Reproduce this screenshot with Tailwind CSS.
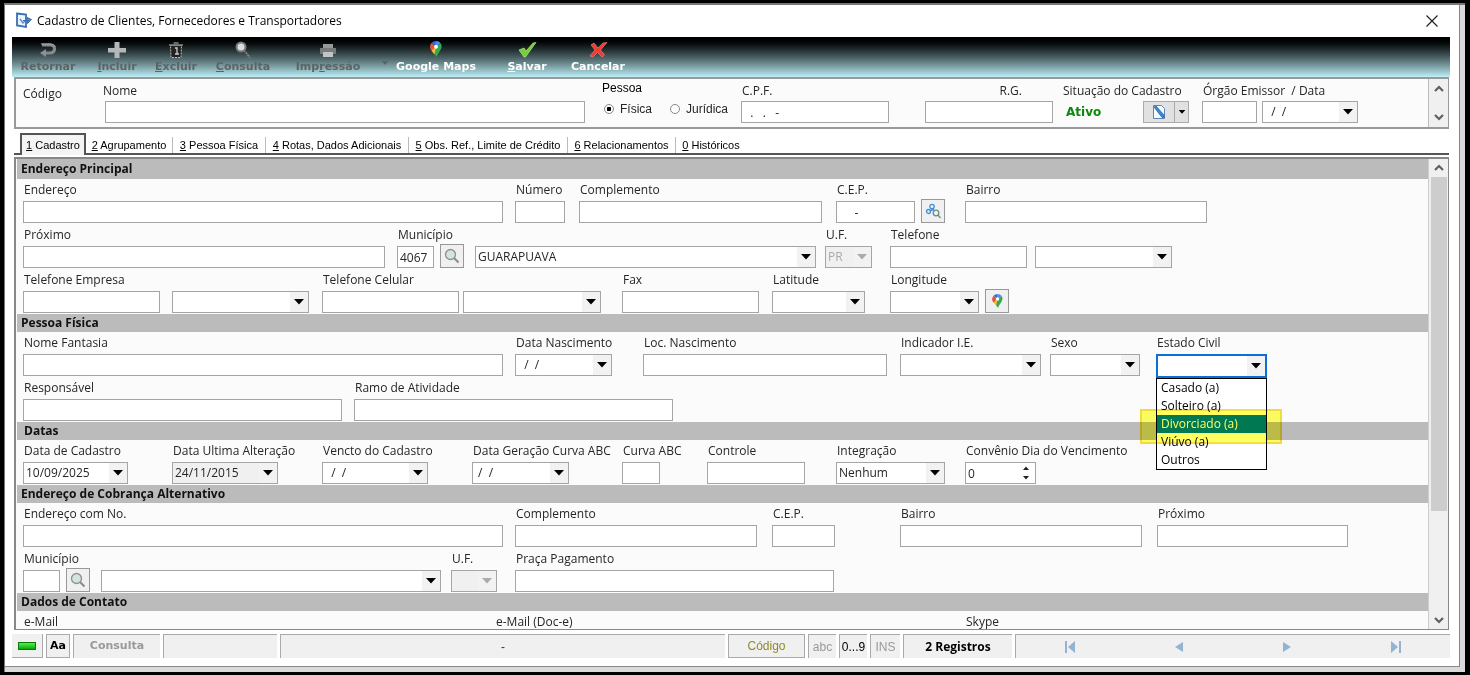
<!DOCTYPE html>
<html lang="pt-BR">
  <head>
    <meta charset="utf-8" />
    <meta name="viewport" content="width=device-width, initial-scale=1" />
    <title>Cadastro de Clientes, Fornecedores e Transportadores</title>
    <script src="https://cdn.jsdelivr.net/npm/@tailwindcss/browser@4"></script>
  </head>
  <body class="bg-black font-['Open_Sans','Noto_Sans',sans-serif] text-xs text-[#262626]">
    <!-- shared icons -->
    <svg class="hidden">
      <symbol id="arrow" viewBox="0 0 10 6"><path d="M0 0h10L5 5.500z" fill="currentColor" /></symbol>
      <symbol id="up" viewBox="0 0 10 8"><path d="M1 6l4-4 4 4" fill="none" stroke="#606060" stroke-width="2.200" /></symbol>
      <symbol id="down" viewBox="0 0 10 8"><path d="M1 2l4 4 4-4" fill="none" stroke="#606060" stroke-width="2.200" /></symbol>
      <symbol id="lens" viewBox="0 0 16 16">
        <path d="M10 10l4.500 4.500" stroke="#8a8a8a" stroke-width="2" />
        <circle cx="6.500" cy="6.500" r="5" fill="#d3e3e0" stroke="#8b9290" stroke-width="1.300" />
      </symbol>
      <symbol id="pin" viewBox="0 0 12 16">
        <path d="M6 0a6 6 0 0 1 4.800 2.400L6 6z" fill="#4a8df0" />
        <path d="M1.500 2A6 6 0 0 1 6 0v6z" fill="#2f6fd8" />
        <path d="M1.500 2L6 6 1.700 10A6 6 0 0 1 1.500 2z" fill="#e8503a" />
        <path d="M1.500 9.500L6 6l1 5-2.500 2.500C3.500 12 2.200 11 1.500 9.500z" fill="#f6bd2b" />
        <path d="M10.800 2.400C13.500 7 9 10 6.600 16 6 15 5.500 14 4.500 13L6 6z" fill="#37a852" />
        <circle cx="6" cy="5.800" r="2" fill="#fff" />
      </symbol>
    </svg>

    <div class="h-screen pt-[3px] pb-[3px] pl-1 pr-[5px]">
      <div class="flex h-full flex-col border-t-2 border-l border-[#777] bg-[#dadada] pr-[5px] pb-[5px]">
        <div class="flex min-h-0 flex-1 flex-col border-r border-b border-[#888] bg-white pr-[9px] pb-2 pl-[7px]">
          <!-- title bar -->
          <header class="flex h-8 shrink-0 items-center pr-3 pl-[3px]">
            <svg class="h-[18px] w-[18px]" viewBox="0 0 18 18">
              <path d="M2 1.500l9 1v12.500l-9-1.500z" fill="#eaf4ff" stroke="#3c6db5" stroke-width="1.800" />
              <path d="M5 7l3 4 2-2" fill="none" stroke="#5b8acb" stroke-width="1.400" />
              <path d="M8 8.500h6M12 5.500l4.500 2-4 4z" stroke="#3a69a8" fill="#5b8acb" />
            </svg>
            <h1 class="ml-1 text-black">Cadastro de Clientes, Fornecedores e Transportadores</h1>
            <button aria-label="Fechar" class="ml-auto">
              <svg class="h-3 w-3" viewBox="0 0 12 12"><path d="M.5.5l11 11M11.500.5l-11 11" stroke="#222" stroke-width="1.200" /></svg>
            </button>
          </header>

          <!-- toolbar -->
          <nav class="flex h-10 shrink-0 items-start bg-linear-to-b from-black to-[#bdf0f8] pt-1 font-['DejaVu_Sans',sans-serif] text-[11px] leading-3 font-bold whitespace-nowrap text-[#5c6466] [&_button]:flex [&_button]:flex-col [&_button]:items-center [&_button]:gap-0.5 [&_svg]:h-[18px] [&_svg]:w-5">
            <button class="ml-2 w-14">
              <svg viewBox="0 0 20 18"><path d="M4 4h8c6 0 6 8 0 8H7" fill="none" stroke="#868a8a" stroke-width="3.200" /><path d="M8 8l-6 4 6 4z" fill="#8c9090" /><path d="M3 3h9c3 0 5 1 5 3" fill="none" stroke="#a8acac" /></svg>
              Retornar
            </button>
            <button class="ml-5 w-[42px]">
              <svg viewBox="0 0 20 18"><path d="M7.500 1h5v6H19v4.500h-6.500V17h-5v-5.500H1V7h6.500z" fill="#b4b7b7" /></svg>
              <span><u>I</u>ncluir</span>
            </button>
            <button class="ml-[17px] w-[42px]">
              <svg viewBox="0 0 20 18"><path d="M4.500 4.500h11L15 16.500H5z" fill="#222" stroke="#bbb" stroke-dasharray="2 1" /><path d="M3 4h14M7.500 2h5" stroke="#888" stroke-width="1.500" /><path d="M9 7h2v6m-2 0h4" stroke="#ccc" fill="none" stroke-width="1.300" /></svg>
              <span><u>E</u>xcluir</span>
            </button>
            <button class="ml-5 w-[52px]">
              <svg viewBox="0 0 20 18"><path d="M11 9l6 8" stroke="#888" stroke-width="1.800" stroke-dasharray="2 1" /><circle cx="8" cy="6" r="4.500" fill="#d9dddd" stroke="#777" stroke-width="2" /></svg>
              <span><u>C</u>onsulta</span>
            </button>
            <button class="ml-[26px] w-[66px]">
              <svg viewBox="0 0 20 18"><path d="M5 3h10v5H5z" fill="#999" /><path d="M2 7h16v6H2z" fill="#777b7b" /><path d="M5 11h10v5H5z" fill="#c2c5c5" /></svg>
              <span>Imp<u>r</u>essão</span>
            </button>
            <button aria-label="Opções de impressão" class="ml-5 w-2 pt-5"><svg class="!h-1 !w-2" viewBox="0 0 10 6"><use href="#arrow" /></svg></button>
            <button class="ml-2 w-[78px] text-white"><svg class="mb-0.5 !h-4 !w-3" viewBox="0 0 12 16"><use href="#pin" /></svg>Google Maps</button>
            <button class="ml-8 w-10 text-white">
              <svg viewBox="0 0 20 18"><path d="M2 9l5-2 2 3 7-8 3-.5L8.500 16H7z" fill="#74cf35" stroke="#c6f0a0" stroke-width=".6" /></svg>
              <span><u>S</u>alvar</span>
            </button>
            <button class="ml-6 w-[54px] text-white">
              <svg viewBox="0 0 20 18"><path d="M3 4l3-2 4 5 5-5 4-.5L12.500 9l4 5-2.500 2-4.500-4.500L5 16l-3-1 5-6z" fill="#ea3d35" stroke="#f58d87" stroke-width=".6" /></svg>
              Cancelar
            </button>
          </nav>

          <main class="flex min-h-0 flex-1 flex-col pl-0.5 pr-px [&_.combo]:relative [&_.combo]:block [&_.combo>svg]:pointer-events-none [&_.combo>svg]:absolute [&_.combo>svg]:top-px [&_.combo>svg]:right-px [&_.combo>svg]:h-5 [&_.combo>svg]:w-[18px] [&_.combo>svg]:bg-[#f2f2f2] [&_.combo>svg]:px-1 [&_.combo>svg]:text-black [&_.row]:flex [&_.row]:h-[45px] [&_.row]:items-end [&_.row]:pb-px [&_.row]:pl-1.5 [&_h2]:h-[18px] [&_h2]:bg-[#bbb] [&_h2]:pl-1 [&_h2]:leading-[18px] [&_h2]:font-bold [&_h2]:text-[#111] [&_input[type=text]]:block [&_input[type=text]]:h-[22px] [&_input[type=text]]:w-full [&_input[type=text]]:border [&_input[type=text]]:border-[#a5a5a5] [&_input[type=text]]:bg-white [&_input[type=text]]:px-0.5 [&_label]:shrink-0 [&_label>.cap]:block [&_label>.cap]:h-[22px] [&_label>.cap]:pl-px [&_label>.cap]:leading-[22px] [&_label>.cap]:whitespace-nowrap [&_select]:block [&_select]:h-[22px] [&_select]:w-full [&_select]:appearance-none [&_select]:border [&_select]:border-[#a5a5a5] [&_select]:bg-white [&_select]:px-0.5 [&_.tool]:grid [&_.tool]:h-6 [&_.tool]:w-6 [&_.tool]:shrink-0 [&_.tool]:place-items-center [&_.tool]:border [&_.tool]:border-[#999] [&_.tool]:bg-[#f0f0f0] [&_.tool_svg]:h-4 [&_.tool_svg]:w-4">
            <!-- record header -->
            <section class="flex h-[52px] shrink-0 border-t-2 border-r border-b-2 border-l-2 border-[#999] bg-[#fbfbfb] [&_.cap]:!leading-6">
              <span class="ml-[7px] w-20 pt-1.5 leading-[18px]">Código</span>
              <label class="w-[482px] [&>input]:ml-0.5 [&>input]:!w-[480px]"><span class="cap !pl-0">Nome</span><input type="text" /></label>
              <fieldset class="ml-[17px] w-[128px] font-['Liberation_Sans',sans-serif] [&_input]:mr-1.5 [&_input]:h-2.5 [&_input]:w-2.5 [&_input]:appearance-none [&_input]:rounded-full [&_input]:border [&_input]:border-[#888] [&_input]:bg-white [&_label]:flex [&_label]:items-center">
                <legend class="leading-[18px] text-black">Pessoa</legend>
                <div class="mt-1 flex gap-[18px] pl-0.5">
                  <label><input type="radio" name="pessoa" checked class="checked:bg-radial checked:from-black checked:from-35% checked:to-white checked:to-45%" />Física</label>
                  <label><input type="radio" name="pessoa" />Jurídica</label>
                </div>
              </fieldset>
              <label class="ml-[11px] w-[148px]"><span class="cap">C.P.F.</span><input type="text" value="  .   .   -" class="whitespace-pre" /></label>
              <label class="ml-9 w-[128px]"><span class="cap pr-[31px] text-right">R.G.</span><input type="text" /></label>
              <div class="ml-2.5 w-[126px]">
                <span class="block h-[22px] leading-6 whitespace-nowrap">Situação do Cadastro</span>
                <div class="flex h-[22px] items-center">
                  <b class="pl-[3px] font-['DejaVu_Sans',sans-serif] text-[#0a8a0a]">Ativo</b>
                  <button aria-label="Alterar situação" class="ml-auto grid h-[22px] w-8 place-items-center border border-[#aaa] bg-[#e1e1e1]">
                    <svg class="h-4 w-4" viewBox="0 0 16 16"><path d="M2.500 1.500h8l3 3v10h-11z" fill="#f6fbff" stroke="#5b86b8" /><path d="M3 3l2-1 8 9v2.500h-2z" fill="#3f86d8" stroke="#1f5aa8" stroke-width=".7" /></svg>
                  </button>
                  <button aria-label="Mais situações" class="grid h-[22px] w-[14px] place-items-center border border-l-0 border-[#aaa] bg-[#e1e1e1]"><svg class="h-1 w-2 text-black" viewBox="0 0 10 6"><use href="#arrow" /></svg></button>
                </div>
              </div>
              <label class="ml-[13px] w-[55px]"><span class="cap">Órgão Emissor&nbsp; / Data</span><input type="text" /></label>
              <div class="ml-[5px] w-24 pt-[22px]"><span class="combo"><select aria-label="Data de emissão"><option>&nbsp; / &nbsp;/</option></select><svg><use href="#arrow" /></svg></span></div>
              <div class="ml-auto flex w-5 flex-col items-center justify-between border-l border-[#bbb] bg-[#f0f0f0] py-1.5 [&_svg]:h-2 [&_svg]:w-2.5">
                <button aria-label="Rolar para cima"><svg><use href="#up" /></svg></button>
                <button aria-label="Rolar para baixo"><svg><use href="#down" /></svg></button>
              </div>
            </section>

            <!-- tabs -->
            <div role="tablist" class="flex h-[26px] shrink-0 items-end border-b-2 border-[#555] pl-1.5 font-['Liberation_Sans',sans-serif] text-[11px] leading-4 whitespace-nowrap text-black [&_button]:h-4 [&_button]:shrink-0">
              <button role="tab" aria-selected="true" class="-mb-0.5 !h-[22px] w-[66px] border-2 border-b-0 border-[#555] bg-[#f4f4f4]"><u>1</u> Cadastro</button>
              <button role="tab" class="w-[87px] border-r border-[#bbb]"><u>2</u> Agrupamento</button>
              <button role="tab" class="w-[93px] border-r border-[#bbb]"><u>3</u> Pessoa Física</button>
              <button role="tab" class="w-[143px] border-r border-[#bbb]"><u>4</u> Rotas, Dados Adicionais</button>
              <button role="tab" class="w-[159px] border-r border-[#bbb]"><u>5</u> Obs. Ref., Limite de Crédito</button>
              <button role="tab" class="w-[108px] border-r border-[#bbb]"><u>6</u> Relacionamentos</button>
              <button role="tab" class="w-[70px]"><u>0</u> Históricos</button>
            </div>

            <!-- form -->
            <div class="mt-0.5 flex min-h-0 flex-1 border-t-2 border-r border-b border-l-2 border-[#888] bg-[#fbfbfb]">
              <div class="min-w-0 flex-1 overflow-hidden pl-px">
                <h2 class="!h-5 !leading-5">Endereço Principal</h2>
                <div class="row">
                  <label class="w-[480px]"><span class="cap">Endereço</span><input type="text" /></label>
                  <label class="ml-3 w-[50px]"><span class="cap">Número</span><input type="text" /></label>
                  <label class="ml-[14px] w-[243px]"><span class="cap">Complemento</span><input type="text" /></label>
                  <label class="ml-[14px] w-[79px]"><span class="cap">C.E.P.</span><input type="text" value="     -" class="whitespace-pre" /></label>
                  <button aria-label="Consultar C.E.P." class="tool ml-1.5">
                    <svg viewBox="0 0 16 16" fill="none" stroke-width="1.300"><circle cx="3.500" cy="8.500" r="2" stroke="#3f8ed8" /><circle cx="7" cy="3.500" r="2.200" stroke="#3f8ed8" /><path d="M5 7.500l4-1" stroke="#3f8ed8" /><circle cx="11" cy="10" r="2.800" stroke="#6d8f85" /><path d="M13 12l2.500 3" stroke="#6d8f85" /></svg>
                  </button>
                  <label class="ml-5 w-[242px]"><span class="cap">Bairro</span><input type="text" /></label>
                </div>
                <div class="row">
                  <label class="w-[362px]"><span class="cap">Próximo</span><input type="text" /></label>
                  <label class="ml-3 w-[37px]"><span class="cap">Município</span><input type="text" value="4067" /></label>
                  <button aria-label="Procurar município" class="tool ml-1.5"><svg><use href="#lens" /></svg></button>
                  <span class="combo ml-[11px] w-[341px] shrink-0"><select aria-label="Nome do município"><option>GUARAPUAVA</option></select><svg><use href="#arrow" /></svg></span>
                  <label class="ml-[9px] w-[47px]"><span class="cap">U.F.</span><span class="combo [&>svg]:!text-[#aaa]"><select disabled class="!bg-[#f0f0f0] text-[#aaa]"><option>PR</option></select><svg><use href="#arrow" /></svg></span></label>
                  <label class="ml-[18px] w-[137px]"><span class="cap">Telefone</span><input type="text" /></label>
                  <span class="combo ml-2 w-[137px] shrink-0"><select aria-label="Tipo do telefone"></select><svg><use href="#arrow" /></svg></span>
                </div>
                <div class="row">
                  <label class="w-[137px]"><span class="cap">Telefone Empresa</span><input type="text" /></label>
                  <span class="combo ml-3 w-[137px] shrink-0"><select aria-label="Tipo do telefone da empresa"></select><svg><use href="#arrow" /></svg></span>
                  <label class="ml-[13px] w-[137px]"><span class="cap">Telefone Celular</span><input type="text" /></label>
                  <span class="combo ml-1 w-[138px] shrink-0"><select aria-label="Tipo do celular"></select><svg><use href="#arrow" /></svg></span>
                  <label class="ml-[21px] w-[137px]"><span class="cap">Fax</span><input type="text" /></label>
                  <label class="ml-[13px] w-[93px]"><span class="cap">Latitude</span><span class="combo"><select></select><svg><use href="#arrow" /></svg></span></label>
                  <label class="ml-[25px] w-[89px]"><span class="cap">Longitude</span><span class="combo"><select></select><svg><use href="#arrow" /></svg></span></label>
                  <button aria-label="Abrir no mapa" class="tool ml-1.5 [&>svg]:!h-[14px] [&>svg]:!w-[11px]"><svg><use href="#pin" /></svg></button>
                </div>

                <h2>Pessoa Física</h2>
                <div class="row">
                  <label class="w-[480px]"><span class="cap">Nome Fantasia</span><input type="text" /></label>
                  <label class="ml-3 w-[97px]"><span class="cap">Data Nascimento</span><span class="combo"><select><option>&nbsp; / &nbsp;/</option></select><svg><use href="#arrow" /></svg></span></label>
                  <label class="ml-[31px] w-[244px]"><span class="cap">Loc. Nascimento</span><input type="text" /></label>
                  <label class="ml-[13px] w-[141px]"><span class="cap">Indicador I.E.</span><span class="combo"><select></select><svg><use href="#arrow" /></svg></span></label>
                  <label class="ml-[9px] w-[90px]"><span class="cap">Sexo</span><span class="combo"><select></select><svg><use href="#arrow" /></svg></span></label>
                  <div class="relative ml-4 w-[111px]">
                    <label><span class="cap">Estado Civil</span><span class="combo [&>svg]:!top-0.5 [&>svg]:!right-0.5"><select class="-mb-0.5 !h-6 !border-2 !border-[#0c6fd8]"></select><svg><use href="#arrow" /></svg></span></label>
                    <!-- open list -->
                    <ul role="listbox" aria-label="Estado Civil" class="absolute top-[46px] left-0 z-10 w-full border border-black bg-white text-black [&>li]:h-[18px] [&>li]:pl-1 [&>li]:leading-[18px]">
                      <li role="option">Casado (a)</li>
                      <li role="option">Solteiro (a)</li>
                      <li role="option" aria-selected="true" class="bg-[#0078d7] text-white">Divorciado (a)</li>
                      <li role="option">Viúvo (a)</li>
                      <li role="option">Outros</li>
                    </ul>
                    <div class="pointer-events-none absolute top-[77px] -left-4 z-20 h-[35px] w-[142px] border-2 border-[#f5e03c] bg-[#ffff60] mix-blend-multiply"></div>
                  </div>
                </div>
                <div class="row">
                  <label class="w-[319px]"><span class="cap">Responsável</span><input type="text" /></label>
                  <label class="ml-3 w-[319px]"><span class="cap">Ramo de Atividade</span><input type="text" /></label>
                </div>

                <h2 class="!pl-[7px]">Datas</h2>
                <div class="row">
                  <label class="w-[105px]"><span class="cap">Data de Cadastro</span><span class="combo"><select><option>10/09/2025</option></select><svg><use href="#arrow" /></svg></span></label>
                  <label class="ml-11 w-[106px]"><span class="cap">Data Ultima Alteração</span><span class="combo"><select class="!bg-[#f0f0f0]"><option>24/11/2015</option></select><svg><use href="#arrow" /></svg></span></label>
                  <label class="ml-11 w-[106px]"><span class="cap">Vencto do Cadastro</span><span class="combo"><select><option>&nbsp; / &nbsp;/</option></select><svg><use href="#arrow" /></svg></span></label>
                  <label class="ml-11 w-[97px]"><span class="cap">Data Geração Curva ABC</span><span class="combo"><select><option>&nbsp;/ &nbsp;/</option></select><svg><use href="#arrow" /></svg></span></label>
                  <label class="ml-[53px] w-[38px]"><span class="cap">Curva ABC</span><input type="text" /></label>
                  <label class="ml-[47px] w-[98px]"><span class="cap">Controle</span><input type="text" /></label>
                  <label class="ml-[31px] w-[109px]"><span class="cap">Integração</span><span class="combo"><select><option>Nenhum</option></select><svg><use href="#arrow" /></svg></span></label>
                  <label class="ml-5 w-[71px]"><span class="cap">Convênio Dia do Vencimento</span>
                    <span class="relative block"><input type="text" inputmode="numeric" value="0" /><svg class="absolute top-1 right-1.5 h-[14px] w-2" viewBox="0 0 8 14"><path d="M1 4l3-3.500L7 4zM1 10l3 3.500L7 10z" fill="#222" /></svg></span>
                  </label>
                </div>

                <h2>Endereço de Cobrança Alternativo</h2>
                <div class="row">
                  <label class="w-[480px]"><span class="cap">Endereço com No.</span><input type="text" /></label>
                  <label class="ml-3 w-[242px]"><span class="cap">Complemento</span><input type="text" /></label>
                  <label class="ml-[15px] w-[63px]"><span class="cap">C.E.P.</span><input type="text" /></label>
                  <label class="ml-[65px] w-[242px]"><span class="cap">Bairro</span><input type="text" /></label>
                  <label class="ml-[15px] w-[191px]"><span class="cap">Próximo</span><input type="text" /></label>
                </div>
                <div class="row">
                  <label class="w-[37px]"><span class="cap">Município</span><input type="text" /></label>
                  <button aria-label="Procurar município" class="tool ml-1.5"><svg><use href="#lens" /></svg></button>
                  <span class="combo ml-[11px] w-[340px] shrink-0"><select aria-label="Nome do município"></select><svg><use href="#arrow" /></svg></span>
                  <label class="ml-2.5 w-[46px]"><span class="cap">U.F.</span><span class="combo [&>svg]:!text-[#aaa]"><select disabled class="!bg-[#f0f0f0]"></select><svg><use href="#arrow" /></svg></span></label>
                  <label class="ml-[18px] w-[319px]"><span class="cap">Praça Pagamento</span><input type="text" /></label>
                </div>

                <h2>Dados de Contato</h2>
                <div class="row">
                  <label class="w-[460px]"><span class="cap">e-Mail</span><input type="text" /></label>
                  <label class="ml-3 w-[458px]"><span class="cap">e-Mail (Doc-e)</span><input type="text" /></label>
                  <label class="ml-3 w-[360px]"><span class="cap">Skype</span><input type="text" /></label>
                </div>
              </div>
              <!-- scroll bar -->
              <div class="flex w-5 shrink-0 flex-col items-center border-l border-[#ccc] bg-[#f0f0f0] [&_svg]:h-2 [&_svg]:w-2.5">
                <button aria-label="Subir" class="h-[18px]"><svg><use href="#up" /></svg></button>
                <div class="w-4 flex-1"><div class="h-[77%] bg-[#cdcdcd]"></div></div>
                <button aria-label="Descer" class="h-[18px]"><svg><use href="#down" /></svg></button>
              </div>
            </div>
          </main>

          <!-- status bar -->
          <footer class="mt-1 flex h-6 shrink-0 gap-[3px] font-['Liberation_Sans',sans-serif] whitespace-nowrap text-[#999] [&>*]:flex [&>*]:shrink-0 [&>*]:items-center [&>*]:justify-center [&>*]:border-t [&>*]:border-l [&>*]:border-[#aaa] [&>*]:bg-[#f0f0f0]">
            <button aria-label="Conectado" class="w-[31px] !border-t-0 !border-r !border-b !border-l-0"><span class="h-2 w-[18px] border border-[#087808] bg-linear-to-b from-[#50f050] to-[#00a800]"></span></button>
            <button class="w-6 border-r border-b font-['DejaVu_Sans',sans-serif] text-[11px] font-bold text-black">Aa</button>
            <span class="w-[87px] font-['DejaVu_Sans',sans-serif] text-[11px] font-bold">Consulta</span>
            <span class="w-[114px]"></span>
            <span class="flex-1 !shrink text-[#333]">-</span>
            <span class="w-[77px] border-r border-b text-[#8f8b27]">Código</span>
            <span class="w-7">abc</span>
            <span class="w-7 text-black">0...9</span>
            <span class="w-[30px]">INS</span>
            <span class="w-[109px] font-['Open_Sans',sans-serif] font-bold text-black">2 Registros</span>
            <div class="w-[435px] !justify-around text-[#93b3d1] [&_svg]:h-3 [&_svg]:w-3">
              <button aria-label="Primeiro"><svg viewBox="0 0 12 12" fill="currentColor"><path d="M1 0h2v12H1zM11 0v12L4 6z" /></svg></button>
              <button aria-label="Anterior"><svg viewBox="0 0 12 12" fill="currentColor"><path d="M10 1v10L2 6z" /></svg></button>
              <button aria-label="Próximo"><svg viewBox="0 0 12 12" fill="currentColor"><path d="M2 1v10l8-5z" /></svg></button>
              <button aria-label="Último"><svg viewBox="0 0 12 12" fill="currentColor"><path d="M9 0h2v12H9zM1 0v12l7-6z" /></svg></button>
            </div>
          </footer>
        </div>
      </div>
    </div>
  </body>
</html>
